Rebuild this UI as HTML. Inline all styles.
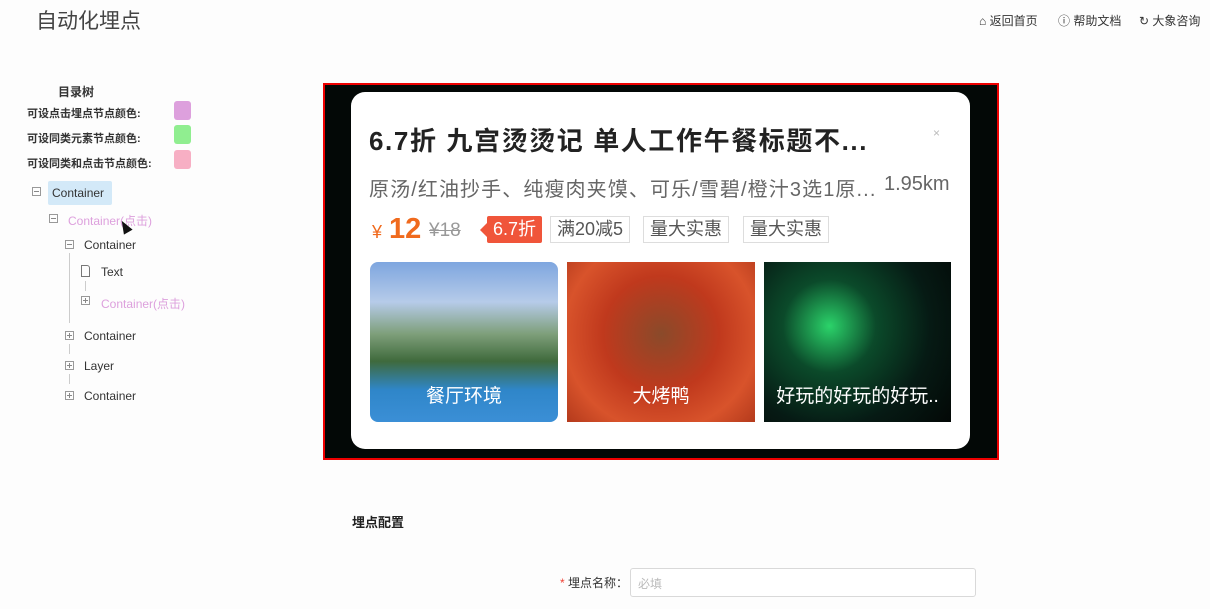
<!DOCTYPE html>
<html><head><meta charset="utf-8"><style>
*{margin:0;padding:0;box-sizing:border-box}
body{width:1210px;height:609px;background:#fdfdfd;font-family:"Liberation Sans","Noto Sans CJK SC",sans-serif;position:relative;overflow:hidden;color:#333}
.a{position:absolute;white-space:nowrap}
.sq{position:absolute;width:9px;height:9px;border:1px solid #999;font-size:0}
.sq:before{content:"";position:absolute;left:1px;top:3px;width:5px;height:1px;background:#888}
.sq.p:after{content:"";position:absolute;left:3px;top:1px;width:1px;height:5px;background:#888}
.vl{position:absolute;width:1px;background:#ccc}
.tag{position:absolute;top:216px;height:27px;border:1px solid #ddd;font-size:18px;color:#555;padding:0 6px;line-height:25px}
.img{position:absolute;top:262px;width:188px;height:160px;overflow:hidden}
.img span{position:absolute;bottom:14px;left:0;right:0;text-align:center;color:#fff;font-size:19px}
</style></head><body>
<div class="a" style="left:36px;top:5px;font-size:21px;color:#444">自动化埋点</div>
<div class="a" style="left:979px;top:12px;font-size:12px;color:#333">⌂ 返回首页</div>
<div class="a" style="left:1058px;top:12px;font-size:12px;color:#333">ⓘ 帮助文档</div>
<div class="a" style="left:1139px;top:12px;font-size:12px;color:#333">↻ 大象咨询</div>

<div class="a" style="left:58px;top:83px;font-size:12px;font-weight:bold">目录树</div>
<div class="a" style="left:27px;top:105px;font-size:11px;font-weight:bold">可设点击埋点节点颜色:</div>
<div class="a" style="left:174px;top:101px;width:17px;height:19px;border-radius:3px;background:#dda0dd"></div>
<div class="a" style="left:27px;top:130px;font-size:11px;font-weight:bold">可设同类元素节点颜色:</div>
<div class="a" style="left:174px;top:125px;width:17px;height:19px;border-radius:3px;background:#90ee90"></div>
<div class="a" style="left:27px;top:155px;font-size:11px;font-weight:bold">可设同类和点击节点颜色:</div>
<div class="a" style="left:174px;top:150px;width:17px;height:19px;border-radius:3px;background:#f7afc4"></div>

<div class="sq" style="left:32px;top:187px"></div>
<div class="a" style="left:48px;top:181px;width:64px;height:24px;background:#d3e9f8;border-radius:2px;font-size:12px;line-height:24px;padding-left:4px">Container</div>
<div class="sq" style="left:49px;top:214px"></div>
<div class="a" style="left:68px;top:212px;font-size:12px;color:#dda0dd">Container(点击)</div>
<div class="sq" style="left:65px;top:240px"></div>
<div class="a" style="left:84px;top:238px;font-size:12px">Container</div>
<div class="vl" style="left:69px;top:253px;height:70px"></div>
<div class="a" style="left:81px;top:265px;width:9px;height:12px;border:1px solid #777;border-radius:0 3px 0 0"></div>
<div class="a" style="left:101px;top:265px;font-size:12px">Text</div>
<div class="vl" style="left:85px;top:281px;height:10px"></div>
<div class="sq p" style="left:81px;top:296px"></div>
<div class="a" style="left:101px;top:295px;font-size:12px;color:#dda0dd">Container(点击)</div>
<div class="sq p" style="left:65px;top:331px"></div>
<div class="a" style="left:84px;top:329px;font-size:12px">Container</div>
<div class="vl" style="left:69px;top:344px;height:10px"></div>
<div class="sq p" style="left:65px;top:361px"></div>
<div class="a" style="left:84px;top:359px;font-size:12px">Layer</div>
<div class="vl" style="left:69px;top:374px;height:10px"></div>
<div class="sq p" style="left:65px;top:391px"></div>
<div class="a" style="left:84px;top:389px;font-size:12px">Container</div>
<div class="a" style="left:120px;top:220px;width:0;height:0;border-left:5px solid transparent;border-right:5px solid transparent;border-bottom:13px solid #111;transform:rotate(-30deg)"></div>

<div class="a" style="left:323px;top:83px;width:676px;height:377px;border:2px solid #e00;background:#030806"></div>
<div class="a" style="left:351px;top:92px;width:619px;height:357px;background:#fff;border-radius:14px"></div>
<div class="a" style="left:369px;top:121px;font-size:26px;letter-spacing:1.6px;font-weight:bold;color:#222">6.7折 九宫烫烫记 单人工作午餐标题不...</div>
<div class="a" style="left:933px;top:126px;font-size:12px;color:#bbb">×</div>
<div class="a" style="left:369px;top:173px;font-size:20px;letter-spacing:1.1px;color:#666">原汤/红油抄手、纯瘦肉夹馍、可乐/雪碧/橙汁3选1原...</div>
<div class="a" style="left:884px;top:173px;font-size:20px;color:#666">1.95km</div>
<div class="a" style="left:372px;top:222px;font-size:18px;color:#f06a1d">¥</div>
<div class="a" style="left:389px;top:213px;font-size:29px;color:#f06a1d;font-weight:bold">12</div>
<div class="a" style="left:429px;top:220px;font-size:19px;color:#999;text-decoration:line-through">¥18</div>
<div class="a" style="left:487px;top:216px;width:55px;height:27px;background:#f0553a;color:#fff;font-size:18px;line-height:27px;text-align:center;border-radius:2px">6.7折</div>
<div class="a" style="left:480px;top:222px;width:0;height:0;border-top:8px solid transparent;border-bottom:8px solid transparent;border-right:8px solid #f0553a"></div>
<div class="tag" style="left:550px">满20减5</div>
<div class="tag" style="left:643px">量大实惠</div>
<div class="tag" style="left:743px">量大实惠</div>
<div class="img" style="left:370px;border-radius:8px;background:linear-gradient(180deg,#7ea6df 0%,#b6cbe9 25%,#7e9f7a 45%,#3f6a3c 62%,#2f86c9 80%,#3b8fd6 100%)"><span>餐厅环境</span></div>
<div class="img" style="left:567px;background:radial-gradient(circle at 50% 45%,#8a4a2a,#c0391d 45%,#d8532b 75%,#b43a1c)"><span>大烤鸭</span></div>
<div class="img" style="left:764px;width:187px;background:radial-gradient(circle at 35% 40%,#2bd36a,#0b4a2a 30%,#061a14 65%,#030806)"><span>好玩的好玩的好玩..</span></div>

<div class="a" style="left:352px;top:512px;font-size:13px;font-weight:bold;color:#222">埋点配置</div>
<div class="a" style="left:560px;top:574px;font-size:12px"><span style="color:#f04134">* </span>埋点名称：</div>
<div class="a" style="left:630px;top:568px;width:346px;height:29px;border:1px solid #d9d9d9;border-radius:3px;background:#fff;font-size:12px;color:#bbb;padding:6px 7px">必填</div>
</body></html>
